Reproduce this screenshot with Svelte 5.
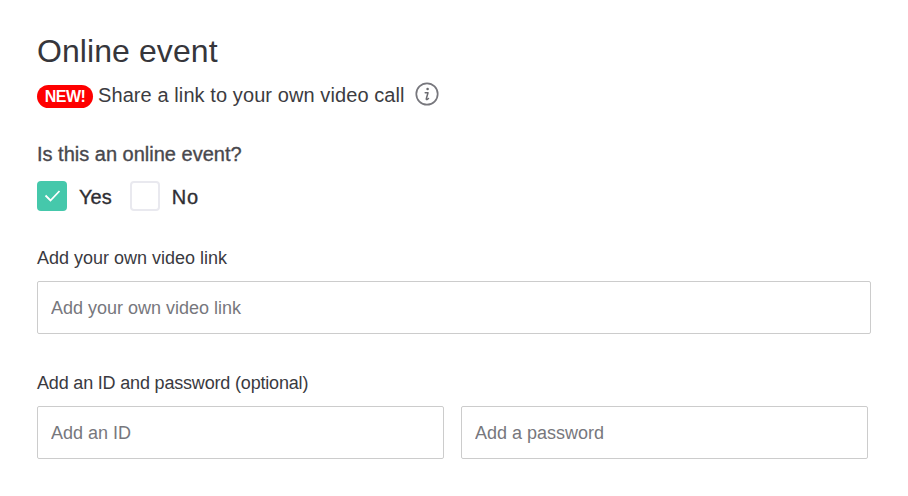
<script>
  let online = $state(true);
</script>

<div class="page">
  <h2>Online event</h2>
  <div class="promo">
    <span class="badge">NEW!</span>
    <span class="promo-text">Share a link to your own video call</span>
    <svg class="info" width="24" height="24" viewBox="0 0 24 24" fill="none">
      <circle cx="12" cy="12" r="10.7" stroke="#77777d" stroke-width="1.7" />
      <circle cx="12.6" cy="7" r="1.3" fill="#6b6b70" />
      <path d="M10.2 10.8h2.8l-1.7 6c-.2.7.4 1 1 .6l1.2-.9" stroke="#6b6b70" stroke-width="1.5" stroke-linecap="round" stroke-linejoin="round" />
    </svg>
  </div>

  <p class="question">Is this an online event?</p>
  <div class="choices">
    <button class="box" aria-label="Yes" onclick={() => (online = true)} class:checked={online}>
      {#if online}
        <svg width="18" height="18" viewBox="0 0 18 18" fill="none">
          <path d="M2.5 8.5l5 5L16.5 4" stroke="#fff" stroke-width="1.8" />
        </svg>
      {/if}
    </button>
    <span class="choice yes">Yes</span>
    <button class="box" aria-label="No" onclick={() => (online = false)} class:checked={!online}>
      {#if !online}
        <svg width="18" height="18" viewBox="0 0 18 18" fill="none">
          <path d="M2.5 8.5l5 5L16.5 4" stroke="#fff" stroke-width="1.8" />
        </svg>
      {/if}
    </button>
    <span class="choice no">No</span>
  </div>

  <label class="field-label link-label" for="video-link">Add your own video link</label>
  <input id="video-link" class="link-input" type="text" placeholder="Add your own video link" />

  <label class="field-label id-label" for="meeting-id">Add an ID and password (optional)</label>
  <div class="pair">
    <input id="meeting-id" type="text" placeholder="Add an ID" />
    <input type="password" placeholder="Add a password" />
  </div>
</div>

<style>
  :global(body) {
    background: #fff;
  }

  .page {
    padding: 31px 37px 0;
    font-family: "Liberation Sans", Arial, sans-serif;
    color: #3c3c41;
  }

  h2 {
    margin: 0;
    font-size: 32px;
    line-height: 40px;
    font-weight: 400;
    letter-spacing: 0.08px;
    color: #36363b;
  }

  .promo {
    display: flex;
    align-items: center;
    height: 26px;
    margin-top: 12px;
  }

  .badge {
    width: 56px;
    height: 23px;
    border-radius: 12px;
    background: #fe0000;
    color: #fff;
    font-size: 16px;
    font-weight: 700;
    line-height: 23px;
    letter-spacing: -0.6px;
    text-align: center;
  }

  .promo-text {
    margin: -2px 0 0 5px;
    font-size: 20px;
    letter-spacing: 0.09px;
  }

  .info {
    margin: -4px 0 0 10px;
  }

  .question {
    margin: 32px 0 0;
    font-size: 20px;
    line-height: 26px;
    font-weight: 400;
    -webkit-text-stroke: 0.35px #48484d;
    color: #48484d;
  }

  .choices {
    display: flex;
    align-items: center;
    margin-top: 14px;
  }

  .box {
    display: flex;
    align-items: center;
    justify-content: center;
    box-sizing: border-box;
    width: 30px;
    height: 30px;
    padding: 0;
    border: 2px solid #e9e9ef;
    border-radius: 4px;
    background: #fff;
  }

  .box.checked {
    border: none;
    background: #45c8ab;
  }

  .choice {
    margin: 2px 0 0 12px;
    font-size: 20px;
    -webkit-text-stroke: 0.35px #2e2e33;
    color: #2e2e33;
  }

  .choice.yes {
    margin-right: 18px;
  }

  .choice.no {
    letter-spacing: 1px;
  }

  .field-label {
    display: block;
    font-size: 18px;
    line-height: 22px;
    color: #3a3a3f;
  }

  .link-label {
    margin-top: 36px;
  }

  .id-label {
    margin-top: 38px;
    letter-spacing: -0.18px;
  }

  input {
    box-sizing: border-box;
    height: 53px;
    padding: 2px 13px 0;
    border: 1px solid #ccc;
    border-radius: 2px;
    font-family: inherit;
    font-size: 18px;
    color: #3c3c41;
    background: #fff;
  }

  input::placeholder {
    color: #77777d;
    opacity: 1;
  }

  .link-input {
    display: block;
    width: 834px;
    margin-top: 12px;
  }

  .pair {
    display: flex;
    gap: 17px;
    margin-top: 12px;
  }

  .pair input {
    width: 407px;
  }
</style>
